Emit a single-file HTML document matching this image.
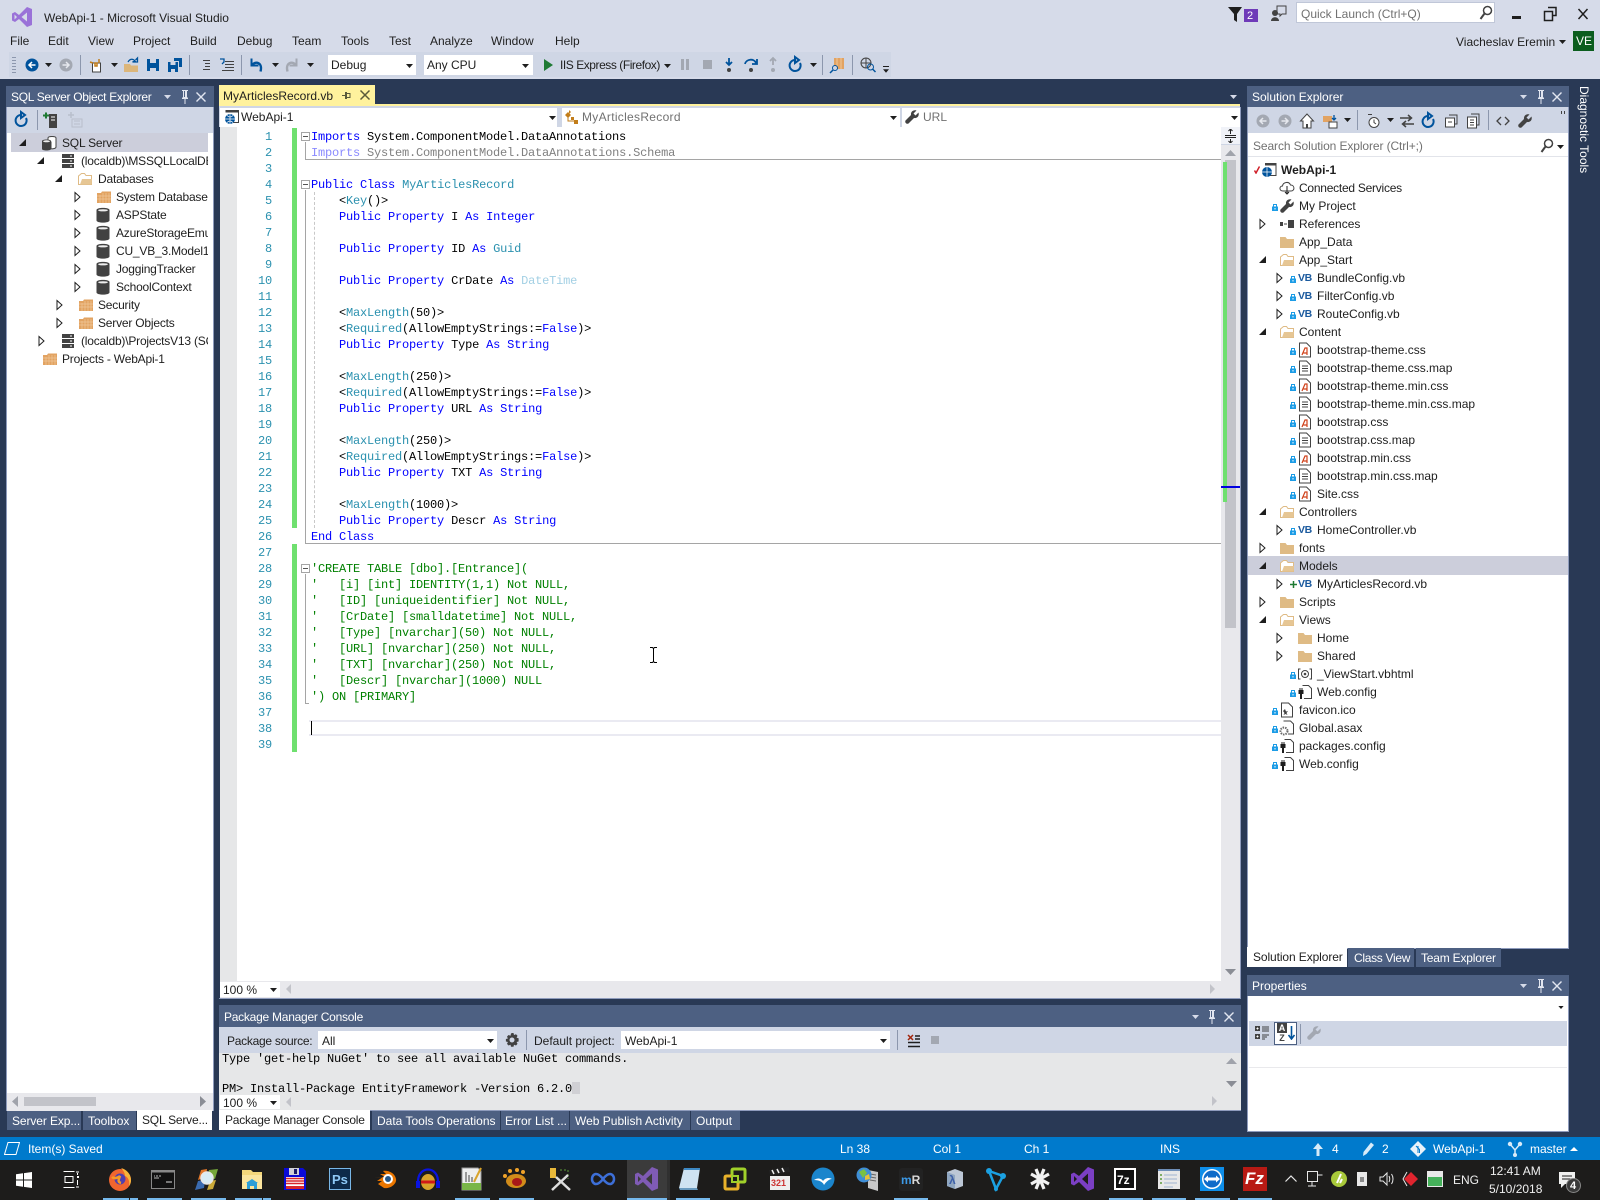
<!DOCTYPE html>
<html lang="en">
<head>
<meta charset="utf-8">
<title>WebApi-1 - Microsoft Visual Studio</title>
<style>
html,body{margin:0;padding:0;background:#293955}
body{position:relative;width:1600px;height:1200px;overflow:hidden}
.t{position:absolute;white-space:nowrap;font:12px/16px "Liberation Sans",sans-serif;color:#1e1e1e}
.w{color:#fff}.g{color:#717171}
.r{position:absolute}
svg.i{position:absolute;width:16px;height:16px;overflow:visible}
svg.a{position:absolute;width:7px;height:4px;overflow:visible}
svg.l{position:absolute;width:6px;height:8px;overflow:visible}
svg.k{position:absolute;width:24px;height:24px;overflow:visible;top:1167px}
pre{position:absolute;margin:0;font:12px/16px "Liberation Mono",monospace;letter-spacing:-.2px;color:#000}
.kw{color:#00f}.ty{color:#2b91af}.cm{color:#008000}.dt{color:#a3d0e4}.fk{color:#8a8aff}.fg{color:#808080}
.vb{position:absolute;font:bold 10.500px/12px "Liberation Sans",sans-serif;color:#1b5a9e;letter-spacing:-.4px}
.ub{position:absolute;top:1198px;height:2px;background:#76b9ed}
.sep{position:absolute;width:1px;background:#8c97ad}
.sq .t{letter-spacing:-.2px}
</style>
</head>
<body>
<svg width="0" height="0" style="position:absolute">
<defs>
<symbol id="dd" viewBox="0 0 7 4"><path d="M0 0h7L3.500 4z" fill="#1e1e1e"/></symbol>
<symbol id="dw" viewBox="0 0 7 4"><path d="M0 0h7L3.500 4z" fill="#d6dbe9"/></symbol>
<symbol id="ec" viewBox="0 0 16 16"><path d="M6 3.500L11 8 6 12.500z" fill="#fff" stroke="#1e1e1e"/></symbol>
<symbol id="ee" viewBox="0 0 16 16"><path d="M12 4v7H5z" fill="#1e1e1e"/></symbol>
<symbol id="fo" viewBox="0 0 16 16"><path d="M1 3h5.500L8 5h7v9H1z" fill="#dfbb85"/></symbol>
<symbol id="fp" viewBox="0 0 16 16"><path d="M1.500 13.500V5L4.500 2.500h3L9 4.500h5.500v9z" fill="#fff" stroke="#dfbb85"/><path d="M3 13.500L5 8h10l-.5 5.500z" fill="#e6c694"/></symbol>
<symbol id="df" viewBox="0 0 16 16"><path d="M1 4h4l1-1.500h9V14H1z" fill="#e2a362"/><path d="M4 6v8M7 4v10M10 4v10M13 4v10M1 7h14M1 10h14" stroke="#f0c798" stroke-width=".7"/></symbol>
<symbol id="db" viewBox="0 0 16 16"><path d="M1.500 3C1.500 .2 14.500 .2 14.500 3V13.500C14.500 16.300 1.500 16.300 1.500 13.500z" fill="#424242"/><ellipse cx="8" cy="3.300" rx="5" ry="1.100" fill="#eee"/></symbol>
<symbol id="sv" viewBox="0 0 16 16"><path d="M2 1h12v14H2z" fill="#424242"/><path d="M2 5.500h12M2 10.500h12" stroke="#fff"/><path d="M10 3h2M10 8h2M10 13h2" stroke="#fff"/></symbol>
<symbol id="sq" viewBox="0 0 16 16"><path d="M7 3C7 1 15 1 15 3v9c0 1.500-3 2-5 1.800V7H7z" fill="#fff" stroke="#424242"/><path d="M1 6c0-2 9-2 9 0v8c0 2-9 2-9 0z" fill="#424242"/><ellipse cx="5.500" cy="6.300" rx="3.500" ry="1" fill="#eee"/></symbol>
<symbol id="lk" viewBox="0 0 6 8"><path d="M0 3.500h6V8H0z" fill="#1c9ce6"/><path d="M1.500 3.500V1.500h3v2" fill="none" stroke="#1c9ce6"/><path d="M2.500 5h1v1.500h-1z" fill="#fff"/></symbol>
<symbol id="cs" viewBox="0 0 16 16"><path d="M2.500 1h7l4 4v10h-11z" fill="#fff" stroke="#424242"/><path d="M5 13l3-7h2v7M6.500 11h3" fill="none" stroke="#d0421b" stroke-width="1.200"/></symbol>
<symbol id="dc" viewBox="0 0 16 16"><path d="M2.500 1h7l4 4v10h-11z" fill="#fff" stroke="#424242"/><path d="M5 6h6M5 8.500h6M5 11h6" stroke="#424242"/></symbol>
<symbol id="pl" viewBox="0 0 16 16"><path d="M5.500 1.500h6l3 3v10H7" fill="#fff" stroke="#424242"/><path d="M1.500 6v4h1.500v5h2v-5h1.500V6H5.500V4H4.500v2h-1V4h-1v2z" fill="#1e1e1e"/></symbol>
<symbol id="wr" viewBox="0 0 16 16"><path d="M14.500 3.500l-3 3-2-2 3-3C9.500.6 6.500 2.500 7 6L1.500 11.500c-1 2 1 4 3 3L10 9c3.300.5 5.500-2 4.500-5.500z" fill="#424242"/></symbol>
<symbol id="mg" viewBox="0 0 16 16"><circle cx="9.500" cy="5.500" r="4" fill="none" stroke="#424242" stroke-width="1.500"/><path d="M6.500 8.500L2.500 14" stroke="#424242" stroke-width="2"/></symbol>
<symbol id="pin" viewBox="0 0 16 16"><path d="M5 1h6v1h-1v6l1 1v1H8.500v5h-1v-5H5V9l1-1V2H5zM7 2v6h1V2z" fill="#e2e6f0"/></symbol>
<symbol id="xx" viewBox="0 0 16 16"><path d="M3.500 3.500l9 9M12.500 3.500l-9 9" stroke="#e2e6f0" stroke-width="1.400"/></symbol>
</defs>
</svg>

<!-- title / menu -->
<div class="r" style="left:0;top:0;width:1600px;height:79px;background:#d6dbe9"></div>
<svg class="i" style="left:11px;top:7px;width:22px;height:20px" viewBox="0 0 22 20"><path d="M16 0l5 2v16l-5 2-8-8-4 3-3-1.500v-7L4 5l4 3z" fill="#9a72d8"/><path d="M16 5.500v9L10.500 10zM3.500 7.500v5L6 10z" fill="#d6dbe9"/></svg>
<span class="t" style="left:44px;top:10px">WebApi-1 - Microsoft Visual Studio</span>
<span class="t" style="left:10px;top:33px">File</span>
<span class="t" style="left:48px;top:33px">Edit</span>
<span class="t" style="left:88px;top:33px">View</span>
<span class="t" style="left:133px;top:33px">Project</span>
<span class="t" style="left:190px;top:33px">Build</span>
<span class="t" style="left:237px;top:33px">Debug</span>
<span class="t" style="left:292px;top:33px">Team</span>
<span class="t" style="left:341px;top:33px">Tools</span>
<span class="t" style="left:389px;top:33px">Test</span>
<span class="t" style="left:430px;top:33px">Analyze</span>
<span class="t" style="left:491px;top:33px">Window</span>
<span class="t" style="left:555px;top:33px">Help</span>

<!-- top right -->
<svg class="i" style="left:1228px;top:6px" viewBox="0 0 16 16"><path d="M0 1h14L9 8v8L6 14V8z" fill="#1e1e1e"/></svg>
<div class="r" style="left:1244px;top:9px;width:14px;height:13px;background:#6e3ab8"></div>
<span class="t w" style="left:1247px;top:8px;font-size:11px">2</span>
<svg class="i" style="left:1271px;top:5px" viewBox="0 0 16 16"><path d="M6 1h9v8h-4l-2 2v-2H6z" fill="none" stroke="#424242"/><circle cx="4" cy="8" r="3" fill="#424242"/><path d="M0 16c0-5 8-5 8 0z" fill="#424242"/></svg>
<div class="r" style="left:1296px;top:2px;width:197px;height:19px;background:#fff;border:1px solid #c0c7d8"></div>
<span class="t g" style="left:1301px;top:6px">Quick Launch (Ctrl+Q)</span>
<svg class="i" style="left:1478px;top:5px" ><use href="#mg"/></svg>
<div class="r" style="left:1512px;top:16px;width:9px;height:3px;background:#1e1e1e"></div>
<svg class="i" style="left:1542px;top:6px" viewBox="0 0 16 16"><path d="M6 1.500h8v8h-3M2.500 5.500h8v9h-8z" fill="none" stroke="#1e1e1e" stroke-width="1.500"/></svg>
<svg class="i" style="left:1575px;top:6px" viewBox="0 0 16 16"><path d="M3.500 3l9 10M12.500 3l-9 10" stroke="#1e1e1e" stroke-width="1.500"/></svg>
<span class="t" style="left:1456px;top:34px">Viacheslav Eremin</span>
<svg class="a" style="left:1559px;top:40px"><use href="#dd"/></svg>
<div class="r" style="left:1573px;top:31px;width:21px;height:20px;background:#0b5d1e"></div>
<span class="t w" style="left:1576px;top:33px">VE</span>

<!-- toolbar -->
<div class="r" style="left:9px;top:52px;width:882px;height:25px;background:#cfd6e5"></div>
<div class="r" style="left:12px;top:56px;width:4px;height:17px;background:repeating-linear-gradient(0deg,#8c97ad 0 1px,transparent 1px 3px)"></div>
<svg class="i" style="left:24px;top:57px" viewBox="0 0 16 16"><circle cx="8" cy="8" r="6.500" fill="#00539c"/><path d="M11.500 8H5.500M8 5L5 8l3 3" fill="none" stroke="#fff" stroke-width="1.500"/></svg>
<svg class="a" style="left:45px;top:63px"><use href="#dd"/></svg>
<svg class="i" style="left:58px;top:57px" viewBox="0 0 16 16"><circle cx="8" cy="8" r="6.500" fill="#a3a8b2"/><path d="M4.500 8h6M8 5l3 3-3 3" fill="none" stroke="#e6e8ee" stroke-width="1.500"/></svg>
<div class="sep" style="left:80px;top:55px;height:20px"></div>
<svg class="i" style="left:88px;top:57px" viewBox="0 0 16 16"><path d="M4.500 6h8v9h-8z" fill="#fff" stroke="#424242"/><path d="M7 6h2v3H7zM11 2v4M2 5l3 1" stroke="#c27d1a" stroke-width="1.500" fill="none"/></svg>
<svg class="a" style="left:111px;top:63px"><use href="#dd"/></svg>
<svg class="i" style="left:123px;top:57px" viewBox="0 0 16 16"><path d="M1 7h6l1 1.500h7V15H1z" fill="#dcb67a"/><path d="M5 5C7 1.500 10 1.500 12 4L9.500 5h5V1l-2 2" fill="none" stroke="#00539c" stroke-width="1.300"/></svg>
<svg class="i" style="left:145px;top:57px" viewBox="0 0 16 16"><path d="M2 2h12v12H2z" fill="#00539c"/><path d="M5 2h6v4H5z" fill="#cfd6e5"/><path d="M5 11h6v3H5z" fill="#cfd6e5"/></svg>
<svg class="i" style="left:167px;top:57px" viewBox="0 0 16 16"><path d="M1 5h10v10H1z" fill="#00539c"/><path d="M3.500 5h5v3h-5zM4 12h4v3H4z" fill="#cfd6e5"/><path d="M7 1h8v9h-3V4H7z" fill="#00539c"/></svg>
<div class="sep" style="left:189px;top:55px;height:20px"></div>
<svg class="i" style="left:198px;top:57px" viewBox="0 0 16 16"><path d="M5 3.500h7M7 6.500h5M7 9.500h5M5 12.500h7" stroke="#424242"/></svg>
<svg class="i" style="left:219px;top:57px" viewBox="0 0 16 16"><path d="M6 4.500h9M6 7.500h9M6 10.500h9M3 13.500h12" stroke="#424242"/><path d="M1 2h4v3L3 7" fill="none" stroke="#00539c" stroke-width="1.300"/></svg>
<div class="sep" style="left:241px;top:55px;height:20px"></div>
<svg class="i" style="left:248px;top:57px" viewBox="0 0 16 16"><path d="M3.500 1.500v7h7" fill="none" stroke="#00539c" stroke-width="2"/><path d="M3.500 8.500C7 3.500 15 5 12.500 14.500" fill="none" stroke="#00539c" stroke-width="2.400"/></svg>
<svg class="a" style="left:272px;top:63px"><use href="#dd"/></svg>
<svg class="i" style="left:284px;top:57px" viewBox="0 0 16 16"><path d="M12.500 1.500v7h-7" fill="none" stroke="#a3a8b2" stroke-width="2"/><path d="M12.500 8.500C9 3.500 1 5 3.500 14.500" fill="none" stroke="#a3a8b2" stroke-width="2.400"/></svg>
<svg class="a" style="left:307px;top:63px"><use href="#dd"/></svg>
<div class="r" style="left:328px;top:55px;width:88px;height:20px;background:#fff"></div>
<span class="t" style="left:331px;top:57px">Debug</span>
<svg class="a" style="left:406px;top:64px"><use href="#dd"/></svg>
<div class="r" style="left:424px;top:55px;width:109px;height:20px;background:#fff"></div>
<span class="t" style="left:427px;top:57px">Any CPU</span>
<svg class="a" style="left:522px;top:64px"><use href="#dd"/></svg>
<svg class="i" style="left:540px;top:57px" viewBox="0 0 16 16"><path d="M4 2l9 6-9 6z" fill="#1e7a33"/></svg>
<span class="t" style="left:560px;top:57px;letter-spacing:-.45px">IIS Express (Firefox)</span>
<svg class="a" style="left:664px;top:64px"><use href="#dd"/></svg>
<div class="r" style="left:681px;top:59px;width:3px;height:11px;background:#a3a8b2"></div>
<div class="r" style="left:686px;top:59px;width:3px;height:11px;background:#a3a8b2"></div>
<div class="r" style="left:703px;top:60px;width:9px;height:9px;background:#a3a8b2"></div>
<svg class="i" style="left:721px;top:57px" viewBox="0 0 16 16"><path d="M8 1v6M5 5l3 3 3-3" fill="none" stroke="#00539c" stroke-width="1.800"/><circle cx="8" cy="13" r="2" fill="#424242"/></svg>
<svg class="i" style="left:743px;top:57px" viewBox="0 0 16 16"><path d="M2 7C3 2 11 1 13 6M14 2v5H9" fill="none" stroke="#00539c" stroke-width="1.800"/><circle cx="8" cy="13" r="2" fill="#424242"/></svg>
<svg class="i" style="left:765px;top:57px" viewBox="0 0 16 16"><path d="M8 8V2M5 4l3-3 3 3" fill="none" stroke="#a3a8b2" stroke-width="1.800"/><circle cx="8" cy="13" r="2" fill="#a3a8b2"/></svg>
<svg class="i" style="left:788px;top:57px" viewBox="0 0 16 16"><path d="M7 3a5.500 5.500 0 1 0 5 3M7 0v6L11 3z" fill="none" stroke="#00539c" stroke-width="2"/></svg>
<svg class="a" style="left:810px;top:63px"><use href="#dd"/></svg>
<div class="sep" style="left:822px;top:55px;height:20px"></div>
<svg class="i" style="left:829px;top:57px" viewBox="0 0 16 16"><path d="M5 1h10v11H5z" fill="#e2a362"/><path d="M8 1v11M12 1v11" stroke="#f0c798"/><circle cx="6" cy="11" r="2.500" fill="#cfd6e5" stroke="#00539c"/><path d="M4 13l-3 3" stroke="#00539c" stroke-width="1.500"/></svg>
<div class="sep" style="left:852px;top:55px;height:20px"></div>
<svg class="i" style="left:860px;top:57px" viewBox="0 0 16 16"><circle cx="6" cy="6" r="5" fill="#cfd6e5" stroke="#424242"/><path d="M1 6h10M6 1v10" stroke="#424242"/><circle cx="10.500" cy="10" r="3" fill="none" stroke="#00539c"/><path d="M12.500 12l3 3" stroke="#00539c" stroke-width="1.500"/></svg>
<div class="r" style="left:883px;top:66px;width:6px;height:1px;background:#1e1e1e"></div>
<svg class="a" style="left:883px;top:69px;width:6px"><use href="#dd"/></svg>

<!-- SQL Server Object Explorer -->
<div class="r" style="left:6px;top:86px;width:206px;height:1024px;background:#fff;border:1px solid #8e9bbc;border-bottom:0"></div>
<div class="r" style="left:6px;top:86px;width:208px;height:21px;background:#4d6082"></div>
<span class="t w" style="left:11px;top:89px;letter-spacing:-.3px">SQL Server Object Explorer</span>
<svg class="a" style="left:164px;top:95px"><use href="#dw"/></svg>
<svg class="i" style="left:177px;top:89px"><use href="#pin"/></svg>
<svg class="i" style="left:193px;top:89px"><use href="#xx"/></svg>
<div class="r" style="left:7px;top:107px;width:206px;height:26px;background:#cfd6e5"></div>
<svg class="i" style="left:14px;top:112px" viewBox="0 0 16 16"><path d="M7 3a5.500 5.500 0 1 0 5 3M7 0v6L11 3z" fill="none" stroke="#00539c" stroke-width="2"/></svg>
<div class="sep" style="left:37px;top:110px;height:20px"></div>
<svg class="i" style="left:43px;top:112px" viewBox="0 0 16 16"><path d="M6 2h8v14H6z" fill="#424242"/><path d="M8 5h4M8 8h4" stroke="#fff"/><path d="M0 3.500h6M3 .5v6" stroke="#1e7a33" stroke-width="2"/></svg>
<svg class="i" style="left:67px;top:112px" viewBox="0 0 16 16"><path d="M5 7h10v8H5z" fill="none" stroke="#b9bfcc"/><path d="M7 9h6M7 12h6" stroke="#b9bfcc"/><path d="M4 0v6M1 3h6" stroke="#b9bfcc" stroke-width="1.500"/></svg>
<div class="r" style="left:11px;top:133px;width:197px;height:19px;background:#ccceDb"></div>

<div class="r sq" style="left:0;top:0;width:208px;height:1093px;overflow:hidden">
<svg class="i" style="left:14px;top:135px"><use href="#ee"/></svg>
<svg class="i" style="left:41px;top:135px"><use href="#sq"/></svg>
<span class="t" style="left:62px;top:135px">SQL Server</span>
<svg class="i" style="left:32px;top:153px"><use href="#ee"/></svg>
<svg class="i" style="left:60px;top:153px"><use href="#sv"/></svg>
<span class="t" style="left:81px;top:153px">(localdb)\MSSQLLocalDB</span>
<svg class="i" style="left:50px;top:171px"><use href="#ee"/></svg>
<svg class="i" style="left:77px;top:171px"><use href="#fp"/></svg>
<span class="t" style="left:98px;top:171px">Databases</span>
<svg class="i" style="left:69px;top:189px"><use href="#ec"/></svg>
<svg class="i" style="left:96px;top:189px"><use href="#df"/></svg>
<span class="t" style="left:116px;top:189px">System Databases</span>
<svg class="i" style="left:69px;top:207px"><use href="#ec"/></svg>
<svg class="i" style="left:95px;top:207px"><use href="#db"/></svg>
<span class="t" style="left:116px;top:207px">ASPState</span>
<svg class="i" style="left:69px;top:225px"><use href="#ec"/></svg>
<svg class="i" style="left:95px;top:225px"><use href="#db"/></svg>
<span class="t" style="left:116px;top:225px">AzureStorageEmulator</span>
<svg class="i" style="left:69px;top:243px"><use href="#ec"/></svg>
<svg class="i" style="left:95px;top:243px"><use href="#db"/></svg>
<span class="t" style="left:116px;top:243px">CU_VB_3.Model1</span>
<svg class="i" style="left:69px;top:261px"><use href="#ec"/></svg>
<svg class="i" style="left:95px;top:261px"><use href="#db"/></svg>
<span class="t" style="left:116px;top:261px">JoggingTracker</span>
<svg class="i" style="left:69px;top:279px"><use href="#ec"/></svg>
<svg class="i" style="left:95px;top:279px"><use href="#db"/></svg>
<span class="t" style="left:116px;top:279px">SchoolContext</span>
<svg class="i" style="left:51px;top:297px"><use href="#ec"/></svg>
<svg class="i" style="left:78px;top:297px"><use href="#df"/></svg>
<span class="t" style="left:98px;top:297px">Security</span>
<svg class="i" style="left:51px;top:315px"><use href="#ec"/></svg>
<svg class="i" style="left:78px;top:315px"><use href="#df"/></svg>
<span class="t" style="left:98px;top:315px">Server Objects</span>
<svg class="i" style="left:33px;top:333px"><use href="#ec"/></svg>
<svg class="i" style="left:60px;top:333px"><use href="#sv"/></svg>
<span class="t" style="left:81px;top:333px">(localdb)\ProjectsV13 (SQL Server)</span>
<svg class="i" style="left:42px;top:351px"><use href="#df"/></svg>
<span class="t" style="left:62px;top:351px">Projects - WebApi-1</span>
</div>
<div class="r" style="left:7px;top:1093px;width:206px;height:18px;background:#e8e8ec"></div>
<div class="r" style="left:24px;top:1097px;width:72px;height:9px;background:#c2c3c9"></div>
<svg class="r" style="left:12px;top:1096px;width:6px;height:11px" viewBox="0 0 6 11"><path d="M6 0v11L0 5.500z" fill="#a0a3ab"/></svg>
<svg class="r" style="left:200px;top:1096px;width:6px;height:11px" viewBox="0 0 6 11"><path d="M0 0v11l6-5.500z" fill="#8a8d95"/></svg>
<div class="r" style="left:7px;top:1111px;width:74px;height:19px;background:#4d6082"></div>
<span class="t w" style="left:12px;top:1113px;letter-spacing:-.1px">Server Exp...</span>
<div class="r" style="left:83px;top:1111px;width:53px;height:19px;background:#4d6082"></div>
<span class="t w" style="left:88px;top:1113px">Toolbox</span>
<div class="r" style="left:137px;top:1110px;width:75px;height:20px;background:#fff"></div>
<span class="t" style="left:142px;top:1112px;letter-spacing:-.2px">SQL Serve...</span>

<!-- document -->
<div class="r" style="left:219px;top:85px;width:156px;height:21px;background:#fff29d"></div>
<div class="r" style="left:219px;top:104px;width:1021px;height:2px;background:#fff29d"></div>
<span class="t" style="left:223px;top:88px">MyArticlesRecord.vb</span>
<svg class="r" style="left:342px;top:91px;width:9px;height:9px" viewBox="0 0 9 9"><path d="M0 4.500h3M3.500 1.500h1v6h-1zM4.500 2.500h3.500v4H4.500z" fill="none" stroke="#5a5a3a"/></svg>
<svg class="i" style="left:357px;top:87px" viewBox="0 0 16 16"><path d="M3.500 3.500l9 9M12.500 3.500l-9 9" stroke="#5a5a3a" stroke-width="1.500"/></svg>
<svg class="a" style="left:1230px;top:95px"><use href="#dw"/></svg>

<div class="r" style="left:219px;top:106px;width:1021px;height:21px;background:#cfd6e5"></div>
<div class="r" style="left:220px;top:108px;width:337px;height:19px;background:#fff"></div>
<svg class="i" style="left:224px;top:109px" viewBox="0 0 16 16"><path d="M1.500 1.500h13v12H9" fill="none" stroke="#424242"/><path d="M1.500 1.500h13v2h-13z" fill="#424242"/><circle cx="6" cy="10" r="5" fill="#00539c"/><path d="M1 10h10M6 5v10M3 6.500c2 2 4 2 6 0M3 13.500c2-2 4-2 6 0" stroke="#fff" fill="none" stroke-width=".7"/></svg>
<span class="t" style="left:241px;top:109px">WebApi-1</span>
<svg class="a" style="left:549px;top:116px"><use href="#dd"/></svg>
<div class="r" style="left:562px;top:108px;width:338px;height:19px;background:#fff"></div>
<svg class="i" style="left:564px;top:109px" viewBox="0 0 16 16"><path d="M1 6l3-3 3 3-3 3z M7 8h3v3H7z M10 11h4v4h-4z M5 1l2 2-2 2z" fill="#c27d1a"/><path d="M4 8v4h6" stroke="#c27d1a" fill="none"/></svg>
<span class="t g" style="left:582px;top:109px;letter-spacing:.3px">MyArticlesRecord</span>
<svg class="a" style="left:890px;top:116px"><use href="#dd"/></svg>
<div class="r" style="left:902px;top:108px;width:338px;height:19px;background:#fff"></div>
<svg class="i" style="left:904px;top:109px"><use href="#wr"/></svg>
<span class="t g" style="left:923px;top:109px">URL</span>
<svg class="a" style="left:1231px;top:116px"><use href="#dd"/></svg>

<!-- editor -->
<div class="r" style="left:220px;top:127px;width:1020px;height:871px;background:#fff"></div>
<div class="r" style="left:220px;top:127px;width:17px;height:871px;background:#e6e7e8"></div>
<div class="r" style="left:292px;top:128px;width:5px;height:400px;background:#6fe06f"></div>
<div class="r" style="left:292px;top:544px;width:5px;height:208px;background:#6fe06f"></div>

<pre style="left:237px;top:129px;width:35px;text-align:right;color:#2b91af">1
2
3
4
5
6
7
8
9
10
11
12
13
14
15
16
17
18
19
20
21
22
23
24
25
26
27
28
29
30
31
32
33
34
35
36
37
38
39</pre>

<!-- folding -->
<div class="r" style="left:305px;top:142px;width:1px;height:17px;background:#a5a5a5"></div>
<div class="r" style="left:305px;top:159px;width:916px;height:1px;background:#a5a5a5"></div>
<div class="r" style="left:301px;top:132px;width:7px;height:7px;border:1px solid #a5a5a5;background:#fff"></div>
<div class="r" style="left:303px;top:136px;width:5px;height:1px;background:#555"></div>
<div class="r" style="left:305px;top:190px;width:1px;height:353px;background:#a5a5a5"></div>
<div class="r" style="left:305px;top:543px;width:916px;height:1px;background:#a5a5a5"></div>
<div class="r" style="left:301px;top:180px;width:7px;height:7px;border:1px solid #a5a5a5;background:#fff"></div>
<div class="r" style="left:303px;top:184px;width:5px;height:1px;background:#555"></div>
<div class="r" style="left:314px;top:192px;width:0;height:336px;border-left:1px dashed #c8c8c8"></div>
<div class="r" style="left:305px;top:574px;width:1px;height:129px;background:#a5a5a5"></div>
<div class="r" style="left:305px;top:703px;width:4px;height:1px;background:#a5a5a5"></div>
<div class="r" style="left:301px;top:564px;width:7px;height:7px;border:1px solid #a5a5a5;background:#fff"></div>
<div class="r" style="left:303px;top:568px;width:5px;height:1px;background:#555"></div>

<!-- current line -->
<div class="r" style="left:309px;top:720px;width:912px;height:12px;border-top:2px solid #eaeaf2;border-bottom:2px solid #eaeaf2"></div>
<div class="r" style="left:311px;top:721px;width:1px;height:14px;background:#000"></div>

<pre style="left:311px;top:129px"><span class="kw">Imports</span> System.ComponentModel.DataAnnotations
<span class="fk">Imports</span> <span class="fg">System.ComponentModel.DataAnnotations.Schema</span>

<span class="kw">Public</span> <span class="kw">Class</span> <span class="ty">MyArticlesRecord</span>
    &lt;<span class="ty">Key</span>()&gt;
    <span class="kw">Public</span> <span class="kw">Property</span> I <span class="kw">As</span> <span class="kw">Integer</span>

    <span class="kw">Public</span> <span class="kw">Property</span> ID <span class="kw">As</span> <span class="ty">Guid</span>

    <span class="kw">Public</span> <span class="kw">Property</span> CrDate <span class="kw">As</span> <span class="dt">DateTime</span>

    &lt;<span class="ty">MaxLength</span>(50)&gt;
    &lt;<span class="ty">Required</span>(AllowEmptyStrings:=<span class="kw">False</span>)&gt;
    <span class="kw">Public</span> <span class="kw">Property</span> Type <span class="kw">As</span> <span class="kw">String</span>

    &lt;<span class="ty">MaxLength</span>(250)&gt;
    &lt;<span class="ty">Required</span>(AllowEmptyStrings:=<span class="kw">False</span>)&gt;
    <span class="kw">Public</span> <span class="kw">Property</span> URL <span class="kw">As</span> <span class="kw">String</span>

    &lt;<span class="ty">MaxLength</span>(250)&gt;
    &lt;<span class="ty">Required</span>(AllowEmptyStrings:=<span class="kw">False</span>)&gt;
    <span class="kw">Public</span> <span class="kw">Property</span> TXT <span class="kw">As</span> <span class="kw">String</span>

    &lt;<span class="ty">MaxLength</span>(1000)&gt;
    <span class="kw">Public</span> <span class="kw">Property</span> Descr <span class="kw">As</span> <span class="kw">String</span>
<span class="kw">End</span> <span class="kw">Class</span>

<span class="cm">'CREATE TABLE [dbo].[Entrance](
'   [i] [int] IDENTITY(1,1) Not NULL,
'   [ID] [uniqueidentifier] Not NULL,
'   [CrDate] [smalldatetime] Not NULL,
'   [Type] [nvarchar](50) Not NULL,
'   [URL] [nvarchar](250) Not NULL,
'   [TXT] [nvarchar](250) Not NULL,
'   [Descr] [nvarchar](1000) NULL
') ON [PRIMARY]</span></pre>

<!-- I-beam -->
<svg class="r" style="left:649px;top:647px;width:9px;height:16px" viewBox="0 0 9 16"><path d="M1 .5h2.500L4.500 1.500 5.500.5H8M4.500 1.500v13M1 15.500h2.500l1-1 1 1H8" fill="none" stroke="#000"/></svg>

<!-- editor scrollbar -->
<div class="r" style="left:1221px;top:127px;width:19px;height:854px;background:#e8e8ec"></div>
<div class="r" style="left:1221px;top:127px;width:19px;height:18px;background:#f0f2f8;border-bottom:1px solid #cfd6e5;box-sizing:border-box"></div>
<svg class="r" style="left:1224px;top:129px;width:13px;height:14px" viewBox="0 0 13 14"><path d="M1 6.500h11M1 8.500h11" stroke="#222"/><path d="M6.500 0v5M4.500 2l2-2 2 2M6.500 14v-4M4.500 12l2 2 2-2" fill="none" stroke="#222"/></svg>
<svg class="r" style="left:1225px;top:150px;width:11px;height:6px" viewBox="0 0 11 6"><path d="M0 6L5.500 0 11 6z" fill="#a0a3ab"/></svg>
<div class="r" style="left:1225px;top:160px;width:11px;height:468px;background:#c2c3c9"></div>
<div class="r" style="left:1223px;top:162px;width:4px;height:340px;background:#6fe06f"></div>
<div class="r" style="left:1221px;top:486px;width:19px;height:2px;background:#0000e0"></div>
<svg class="r" style="left:1225px;top:969px;width:11px;height:6px" viewBox="0 0 11 6"><path d="M0 0l5.500 6L11 0z" fill="#8a8d95"/></svg>
<div class="r" style="left:220px;top:981px;width:1020px;height:17px;background:#e8e8ec"></div>
<div class="r" style="left:220px;top:982px;width:60px;height:15px;background:#fff"></div>
<span class="t" style="left:223px;top:982px">100 %</span>
<svg class="a" style="left:270px;top:988px"><use href="#dd"/></svg>
<svg class="r" style="left:286px;top:984px;width:5px;height:10px" viewBox="0 0 5 10"><path d="M5 0v10L0 5z" fill="#c2c3c9"/></svg>
<svg class="r" style="left:1210px;top:984px;width:5px;height:10px" viewBox="0 0 5 10"><path d="M0 0v10l5-5z" fill="#c2c3c9"/></svg>
<div class="r" style="left:219px;top:998px;width:1022px;height:1px;background:#8e9bbc"></div>
<div class="r" style="left:1240px;top:107px;width:1px;height:891px;background:#8e9bbc"></div>

<!-- Package Manager Console -->
<div class="r" style="left:219px;top:1005px;width:1022px;height:22px;background:#4d6082"></div>
<span class="t w" style="left:224px;top:1009px;letter-spacing:-.25px">Package Manager Console</span>
<svg class="a" style="left:1192px;top:1015px"><use href="#dw"/></svg>
<svg class="i" style="left:1204px;top:1009px"><use href="#pin"/></svg>
<svg class="i" style="left:1221px;top:1009px"><use href="#xx"/></svg>
<div class="r" style="left:219px;top:1027px;width:1022px;height:26px;background:#cfd6e5"></div>
<span class="t" style="left:227px;top:1033px;letter-spacing:-.27px">Package source:</span>
<div class="r" style="left:318px;top:1031px;width:179px;height:18px;background:#fff"></div>
<span class="t" style="left:322px;top:1033px">All</span>
<svg class="a" style="left:487px;top:1039px"><use href="#dd"/></svg>
<svg class="i" style="left:504px;top:1032px" viewBox="0 0 16 16"><path d="M8 1l1.500 0 .5 2 2-.7 1.500 1.500-.9 1.900 2 .5V9.500l-2 .5.900 1.900L12 13.500l-2-.8-.5 2.100h-2.500L6.500 12.700l-2 .8-1.500-1.600.9-1.900-2-.5V7l2-.5L3 4.600 4.500 3l2 .7L7 1.500z" fill="#424242"/><circle cx="8" cy="8" r="2.500" fill="#cfd6e5"/></svg>
<div class="sep" style="left:526px;top:1030px;height:20px"></div>
<span class="t" style="left:534px;top:1033px">Default project:</span>
<div class="r" style="left:621px;top:1031px;width:269px;height:18px;background:#fff"></div>
<span class="t" style="left:625px;top:1033px">WebApi-1</span>
<svg class="a" style="left:880px;top:1039px"><use href="#dd"/></svg>
<div class="sep" style="left:897px;top:1030px;height:20px"></div>
<svg class="i" style="left:905px;top:1033px" viewBox="0 0 16 16"><path d="M3 2l5 5M8 2L3 7" stroke="#a1260d" stroke-width="1.500"/><path d="M10 3h5M10 6h5M3 9.500h12M3 13.500h12" stroke="#1e1e1e" stroke-width="1.500"/></svg>
<div class="r" style="left:931px;top:1036px;width:8px;height:8px;background:#a3a8b2"></div>
<div class="r" style="left:219px;top:1053px;width:1022px;height:57px;background:#e6e7e8"></div>
<pre style="left:222px;top:1051px">Type 'get-help NuGet' to see all available NuGet commands.</pre>
<pre style="left:222px;top:1081px">PM&gt; Install-Package EntityFramework -Version 6.2.0</pre>
<div class="r" style="left:572px;top:1082px;width:8px;height:12px;background:#d0d0d4"></div>
<svg class="r" style="left:1226px;top:1058px;width:11px;height:6px" viewBox="0 0 11 6"><path d="M0 6L5.500 0 11 6z" fill="#a0a3ab"/></svg>
<svg class="r" style="left:1226px;top:1081px;width:11px;height:6px" viewBox="0 0 11 6"><path d="M0 0l5.500 6L11 0z" fill="#8a8d95"/></svg>
<div class="r" style="left:220px;top:1095px;width:60px;height:14px;background:#fff"></div>
<span class="t" style="left:223px;top:1095px">100 %</span>
<svg class="a" style="left:270px;top:1101px"><use href="#dd"/></svg>
<svg class="r" style="left:286px;top:1097px;width:5px;height:10px" viewBox="0 0 5 10"><path d="M5 0v10L0 5z" fill="#c2c3c9"/></svg>
<svg class="r" style="left:1212px;top:1096px;width:5px;height:10px" viewBox="0 0 5 10"><path d="M0 0v10l5-5z" fill="#c2c3c9"/></svg>
<div class="r" style="left:219px;top:1110px;width:1022px;height:1px;background:#8e9bbc"></div>
<div class="r" style="left:219px;top:1110px;width:151px;height:20px;background:#fff"></div>
<span class="t" style="left:225px;top:1112px;letter-spacing:-.22px">Package Manager Console</span>
<div class="r" style="left:372px;top:1111px;width:128px;height:19px;background:#4d6082"></div>
<span class="t w" style="left:377px;top:1113px">Data Tools Operations</span>
<div class="r" style="left:501px;top:1111px;width:68px;height:19px;background:#4d6082"></div>
<span class="t w" style="left:505px;top:1113px">Error List ...</span>
<div class="r" style="left:570px;top:1111px;width:120px;height:19px;background:#4d6082"></div>
<span class="t w" style="left:575px;top:1113px">Web Publish Activity</span>
<div class="r" style="left:691px;top:1111px;width:49px;height:19px;background:#4d6082"></div>
<span class="t w" style="left:696px;top:1113px">Output</span>

<!-- Solution Explorer -->
<div class="r" style="left:1247px;top:86px;width:320px;height:861px;background:#fff;border:1px solid #8e9bbc"></div>
<div class="r" style="left:1247px;top:86px;width:322px;height:21px;background:#4d6082"></div>
<span class="t w" style="left:1252px;top:89px">Solution Explorer</span>
<svg class="a" style="left:1520px;top:95px"><use href="#dw"/></svg>
<svg class="i" style="left:1533px;top:89px"><use href="#pin"/></svg>
<svg class="i" style="left:1549px;top:89px"><use href="#xx"/></svg>
<div class="r" style="left:1248px;top:107px;width:320px;height:26px;background:#cfd6e5"></div>
<svg class="i" style="left:1255px;top:113px" viewBox="0 0 16 16"><circle cx="8" cy="8" r="6.500" fill="#a3a8b2"/><path d="M11.500 8H5.500M8 5L5 8l3 3" fill="none" stroke="#e6e8ee" stroke-width="1.500"/></svg>
<svg class="i" style="left:1277px;top:113px" viewBox="0 0 16 16"><circle cx="8" cy="8" r="6.500" fill="#a3a8b2"/><path d="M4.500 8h6M8 5l3 3-3 3" fill="none" stroke="#e6e8ee" stroke-width="1.500"/></svg>
<svg class="i" style="left:1299px;top:113px" viewBox="0 0 16 16"><path d="M8 1L1.500 8H4v7h8V8h2.500z" fill="#fff" stroke="#424242"/><path d="M7 11h2v4H7z" fill="#424242"/></svg>
<svg class="i" style="left:1322px;top:113px" viewBox="0 0 16 16"><path d="M1 3h9v6H1z" fill="#e2a362"/><path d="M7 9h8v6H7z" fill="#fff" stroke="#424242"/><path d="M12 2v5M10 5l2 2 2-2" stroke="#00539c" fill="none" stroke-width="1.300"/></svg>
<svg class="a" style="left:1344px;top:118px"><use href="#dd"/></svg>
<div class="sep" style="left:1357px;top:110px;height:20px"></div>
<svg class="i" style="left:1366px;top:113px" viewBox="0 0 16 16"><circle cx="8" cy="9.500" r="5" fill="#fff" stroke="#424242"/><path d="M8 6.500v3l2 1.500M2 1.500h4" stroke="#424242" fill="none"/></svg>
<svg class="a" style="left:1387px;top:118px"><use href="#dd"/></svg>
<svg class="i" style="left:1399px;top:113px" viewBox="0 0 16 16"><path d="M1 5h11M9 2l3.500 3L9 8M15 11H4M7 8l-3.500 3L7 14" fill="none" stroke="#424242" stroke-width="1.500"/></svg>
<svg class="i" style="left:1421px;top:113px" viewBox="0 0 16 16"><path d="M7 3a5.500 5.500 0 1 0 5 3M7 0v6L11 3z" fill="none" stroke="#00539c" stroke-width="2"/></svg>
<svg class="i" style="left:1443px;top:113px" viewBox="0 0 16 16"><path d="M6 2h8v9h-2" fill="none" stroke="#424242"/><path d="M2.500 5h9v9h-9z" fill="#fff" stroke="#424242"/><path d="M5 9h4" stroke="#424242"/></svg>
<svg class="i" style="left:1465px;top:113px" viewBox="0 0 16 16"><path d="M6 1h8v11h-2" fill="none" stroke="#424242"/><path d="M2.500 4h9v11h-9z" fill="#fff" stroke="#424242"/><path d="M5 7h4M5 9.500h4M5 12h4" stroke="#424242"/></svg>
<div class="sep" style="left:1488px;top:110px;height:20px"></div>
<svg class="i" style="left:1495px;top:113px" viewBox="0 0 16 16"><path d="M6 4L2 8l4 4M10 4l4 4-4 4" fill="none" stroke="#424242" stroke-width="1.300"/></svg>
<svg class="i" style="left:1517px;top:113px"><use href="#wr"/></svg>
<div class="r" style="left:1561px;top:111px;width:1px;height:3px;background:#424242"></div>
<div class="r" style="left:1564px;top:111px;width:1px;height:3px;background:#424242"></div>
<div class="r" style="left:1248px;top:136px;width:320px;height:21px;background:#fff;border-bottom:1px solid #e2e4ea;box-sizing:border-box"></div>
<span class="t g" style="left:1253px;top:138px;letter-spacing:-.1px">Search Solution Explorer (Ctrl+;)</span>
<svg class="i" style="left:1539px;top:138px"><use href="#mg"/></svg>
<svg class="a" style="left:1557px;top:145px"><use href="#dd"/></svg>

<!-- tree -->
<div class="r" style="left:1248px;top:556px;width:320px;height:19px;background:#ccceDb"></div>
<svg class="r" style="left:1254px;top:166px;width:6px;height:8px" viewBox="0 0 6 8"><path d="M.5 4.500L2 7l3.500-6.500" fill="none" stroke="#d0202a" stroke-width="1.500"/></svg>
<svg class="i" style="left:1261px;top:162px" viewBox="0 0 16 16"><path d="M4 1.500h11v12H9" fill="none" stroke="#424242"/><path d="M4 1.500h11v2H4z" fill="#424242"/><circle cx="6" cy="10" r="5" fill="#00539c"/><path d="M1 10h10M6 5v10" stroke="#fff" stroke-width=".7"/></svg>
<span class="t" style="left:1281px;top:162px;font-weight:bold">WebApi-1</span>
<svg class="i" style="left:1279px;top:180px" viewBox="0 0 16 16"><path d="M4 11C0 11 0 6 3.500 6 4 2 10 1 11.500 5 16 5 16 11 12 11z" fill="#fff" stroke="#424242"/><path d="M8 6v8M6 12l2 2 2-2" stroke="#1e1e1e" fill="none"/></svg>
<span class="t" style="left:1299px;top:180px;letter-spacing:-.25px">Connected Services</span>
<svg class="l" style="left:1272px;top:203px"><use href="#lk"/></svg>
<svg class="i" style="left:1279px;top:198px"><use href="#wr"/></svg>
<span class="t" style="left:1299px;top:198px">My Project</span>
<svg class="i" style="left:1254px;top:216px"><use href="#ec"/></svg>
<svg class="i" style="left:1279px;top:216px" viewBox="0 0 16 16"><path d="M1 6h3v4H1zM9 4h6v8H9z" fill="#424242"/><path d="M5 8h3" stroke="#424242"/></svg>
<span class="t" style="left:1299px;top:216px">References</span>
<svg class="i" style="left:1279px;top:234px"><use href="#fo"/></svg>
<span class="t" style="left:1299px;top:234px">App_Data</span>
<svg class="i" style="left:1254px;top:252px"><use href="#ee"/></svg>
<svg class="i" style="left:1279px;top:252px"><use href="#fp"/></svg>
<span class="t" style="left:1299px;top:252px">App_Start</span>

<svg class="i" style="left:1271px;top:270px"><use href="#ec"/></svg>
<svg class="l" style="left:1290px;top:275px"><use href="#lk"/></svg>
<span class="vb" style="left:1298px;top:272px">VB</span>
<span class="t" style="left:1317px;top:270px">BundleConfig.vb</span>
<svg class="i" style="left:1271px;top:288px"><use href="#ec"/></svg>
<svg class="l" style="left:1290px;top:293px"><use href="#lk"/></svg>
<span class="vb" style="left:1298px;top:290px">VB</span>
<span class="t" style="left:1317px;top:288px">FilterConfig.vb</span>
<svg class="i" style="left:1271px;top:306px"><use href="#ec"/></svg>
<svg class="l" style="left:1290px;top:311px"><use href="#lk"/></svg>
<span class="vb" style="left:1298px;top:308px">VB</span>
<span class="t" style="left:1317px;top:306px">RouteConfig.vb</span>

<svg class="i" style="left:1254px;top:324px"><use href="#ee"/></svg>
<svg class="i" style="left:1279px;top:324px"><use href="#fp"/></svg>
<span class="t" style="left:1299px;top:324px">Content</span>

<svg class="l" style="left:1290px;top:347px"><use href="#lk"/></svg><svg class="i" style="left:1297px;top:342px"><use href="#cs"/></svg>
<span class="t" style="left:1317px;top:342px">bootstrap-theme.css</span>
<svg class="l" style="left:1290px;top:365px"><use href="#lk"/></svg><svg class="i" style="left:1297px;top:360px"><use href="#dc"/></svg>
<span class="t" style="left:1317px;top:360px">bootstrap-theme.css.map</span>
<svg class="l" style="left:1290px;top:383px"><use href="#lk"/></svg><svg class="i" style="left:1297px;top:378px"><use href="#cs"/></svg>
<span class="t" style="left:1317px;top:378px">bootstrap-theme.min.css</span>
<svg class="l" style="left:1290px;top:401px"><use href="#lk"/></svg><svg class="i" style="left:1297px;top:396px"><use href="#dc"/></svg>
<span class="t" style="left:1317px;top:396px">bootstrap-theme.min.css.map</span>
<svg class="l" style="left:1290px;top:419px"><use href="#lk"/></svg><svg class="i" style="left:1297px;top:414px"><use href="#cs"/></svg>
<span class="t" style="left:1317px;top:414px">bootstrap.css</span>
<svg class="l" style="left:1290px;top:437px"><use href="#lk"/></svg><svg class="i" style="left:1297px;top:432px"><use href="#dc"/></svg>
<span class="t" style="left:1317px;top:432px">bootstrap.css.map</span>
<svg class="l" style="left:1290px;top:455px"><use href="#lk"/></svg><svg class="i" style="left:1297px;top:450px"><use href="#cs"/></svg>
<span class="t" style="left:1317px;top:450px">bootstrap.min.css</span>
<svg class="l" style="left:1290px;top:473px"><use href="#lk"/></svg><svg class="i" style="left:1297px;top:468px"><use href="#dc"/></svg>
<span class="t" style="left:1317px;top:468px">bootstrap.min.css.map</span>
<svg class="l" style="left:1290px;top:491px"><use href="#lk"/></svg><svg class="i" style="left:1297px;top:486px"><use href="#cs"/></svg>
<span class="t" style="left:1317px;top:486px">Site.css</span>

<svg class="i" style="left:1254px;top:504px"><use href="#ee"/></svg>
<svg class="i" style="left:1279px;top:504px"><use href="#fp"/></svg>
<span class="t" style="left:1299px;top:504px">Controllers</span>
<svg class="i" style="left:1271px;top:522px"><use href="#ec"/></svg>
<svg class="l" style="left:1290px;top:527px"><use href="#lk"/></svg>
<span class="vb" style="left:1298px;top:524px">VB</span>
<span class="t" style="left:1317px;top:522px">HomeController.vb</span>
<svg class="i" style="left:1254px;top:540px"><use href="#ec"/></svg>
<svg class="i" style="left:1279px;top:540px"><use href="#fo"/></svg>
<span class="t" style="left:1299px;top:540px">fonts</span>
<svg class="i" style="left:1254px;top:558px"><use href="#ee"/></svg>
<svg class="i" style="left:1279px;top:558px"><use href="#fp"/></svg>
<span class="t" style="left:1299px;top:558px">Models</span>
<svg class="i" style="left:1271px;top:576px"><use href="#ec"/></svg>
<svg class="r" style="left:1290px;top:581px;width:7px;height:7px" viewBox="0 0 7 7"><path d="M3.500 0v7M0 3.500h7" stroke="#1e7a33" stroke-width="1.500"/></svg>
<span class="vb" style="left:1298px;top:578px">VB</span>
<span class="t" style="left:1317px;top:576px">MyArticlesRecord.vb</span>
<svg class="i" style="left:1254px;top:594px"><use href="#ec"/></svg>
<svg class="i" style="left:1279px;top:594px"><use href="#fo"/></svg>
<span class="t" style="left:1299px;top:594px">Scripts</span>
<svg class="i" style="left:1254px;top:612px"><use href="#ee"/></svg>
<svg class="i" style="left:1279px;top:612px"><use href="#fp"/></svg>
<span class="t" style="left:1299px;top:612px">Views</span>
<svg class="i" style="left:1271px;top:630px"><use href="#ec"/></svg>
<svg class="i" style="left:1297px;top:630px"><use href="#fo"/></svg>
<span class="t" style="left:1317px;top:630px">Home</span>
<svg class="i" style="left:1271px;top:648px"><use href="#ec"/></svg>
<svg class="i" style="left:1297px;top:648px"><use href="#fo"/></svg>
<span class="t" style="left:1317px;top:648px">Shared</span>
<svg class="l" style="left:1290px;top:671px"><use href="#lk"/></svg>
<svg class="i" style="left:1297px;top:666px" viewBox="0 0 16 16"><path d="M3.500 3H1.500v10H3.500M12.500 3h2v10h-2" fill="none" stroke="#424242"/><circle cx="8" cy="8" r="3.500" fill="none" stroke="#424242"/><circle cx="8" cy="8" r="1.300" fill="#424242"/></svg>
<span class="t" style="left:1317px;top:666px">_ViewStart.vbhtml</span>
<svg class="l" style="left:1290px;top:689px"><use href="#lk"/></svg><svg class="i" style="left:1297px;top:684px"><use href="#pl"/></svg>
<span class="t" style="left:1317px;top:684px">Web.config</span>
<svg class="l" style="left:1272px;top:707px"><use href="#lk"/></svg>
<svg class="i" style="left:1279px;top:702px" viewBox="0 0 16 16"><path d="M2.500 1h7l4 4v10h-11z" fill="#fff" stroke="#424242"/><path d="M6 7l1 2.500L9 9 7.500 11l1 2-2-1-2 1 1-2L4 9z" fill="#424242"/></svg>
<span class="t" style="left:1299px;top:702px">favicon.ico</span>
<svg class="l" style="left:1272px;top:725px"><use href="#lk"/></svg>
<svg class="i" style="left:1279px;top:720px" viewBox="0 0 16 16"><path d="M4.500 1h7l3 3v10H9" fill="#fff" stroke="#424242"/><circle cx="5" cy="11" r="3.500" fill="#fff" stroke="#6a6a6a" stroke-width="2" stroke-dasharray="1.500 1"/></svg>
<span class="t" style="left:1299px;top:720px">Global.asax</span>
<svg class="l" style="left:1272px;top:743px"><use href="#lk"/></svg><svg class="i" style="left:1279px;top:738px"><use href="#pl"/></svg>
<span class="t" style="left:1299px;top:738px">packages.config</span>
<svg class="l" style="left:1272px;top:761px"><use href="#lk"/></svg><svg class="i" style="left:1279px;top:756px"><use href="#pl"/></svg>
<span class="t" style="left:1299px;top:756px">Web.config</span>

<!-- diagnostic tab -->
<span class="t w" style="left:1577px;top:86px;writing-mode:vertical-rl;line-height:14px">Diagnostic Tools</span>

<!-- SE tabs -->
<div class="r" style="left:1247px;top:947px;width:100px;height:20px;background:#fff"></div>
<span class="t" style="left:1253px;top:949px;letter-spacing:-.1px">Solution Explorer</span>
<div class="r" style="left:1348px;top:948px;width:66px;height:19px;background:#4d6082"></div>
<span class="t w" style="left:1354px;top:950px;letter-spacing:-.3px">Class View</span>
<div class="r" style="left:1416px;top:948px;width:85px;height:19px;background:#4d6082"></div>
<span class="t w" style="left:1421px;top:950px;letter-spacing:-.2px">Team Explorer</span>

<!-- Properties -->
<div class="r" style="left:1247px;top:975px;width:320px;height:155px;background:#fff;border:1px solid #8e9bbc"></div>
<div class="r" style="left:1247px;top:975px;width:322px;height:21px;background:#4d6082"></div>
<span class="t w" style="left:1252px;top:978px">Properties</span>
<svg class="a" style="left:1520px;top:984px"><use href="#dw"/></svg>
<svg class="i" style="left:1533px;top:978px"><use href="#pin"/></svg>
<svg class="i" style="left:1549px;top:978px"><use href="#xx"/></svg>
<svg class="r" style="left:1558px;top:1006px;width:6px;height:3px" viewBox="0 0 7 4"><path d="M0 0h7L3.500 4z" fill="#1e1e1e"/></svg>
<div class="r" style="left:1249px;top:1021px;width:318px;height:25px;background:#cfd6e5"></div>
<svg class="i" style="left:1254px;top:1025px" viewBox="0 0 16 16"><path d="M1 1h5v5H1zM1 9h5v5H1z" fill="#424242"/><path d="M2.500 3.500h2M2.500 11.500h2M3.500 2.500v2M3.500 10.500v2" stroke="#fff"/><path d="M8 2h7M8 4h7M8 6h7M8 10h7M8 12h5M8 14h3" stroke="#424242"/></svg>
<div class="r" style="left:1274px;top:1022px;width:21px;height:21px;background:#fff;border:1px solid #4d6082"></div>
<span class="r" style="left:1277px;top:1023px;font:bold 9px/10px 'Liberation Sans',sans-serif;background:#424242;color:#fff;width:10px;text-align:center">A</span>
<span class="r" style="left:1277px;top:1033px;font:bold 9px/10px 'Liberation Sans',sans-serif;color:#424242;width:10px;text-align:center">Z</span>
<svg class="r" style="left:1288px;top:1026px;width:7px;height:14px" viewBox="0 0 7 14"><path d="M3.500 0v12M.5 9l3 4 3-4" fill="none" stroke="#00539c" stroke-width="1.600"/></svg>
<div class="sep" style="left:1300px;top:1024px;height:20px"></div>
<svg class="i" style="left:1306px;top:1025px" viewBox="0 0 16 16"><path d="M14.500 3.500l-3 3-2-2 3-3C9.500.6 6.500 2.500 7 6L1.500 11.500c-1 2 1 4 3 3L10 9c3.300.5 5.500-2 4.500-5.500z" fill="#a3a8b2"/></svg>
<div class="r" style="left:1249px;top:1067px;width:318px;height:1px;background:#e9e9ec"></div>

<!-- status bar -->
<div class="r" style="left:0;top:1137px;width:1600px;height:23px;background:#007acc"></div>
<svg class="r" style="left:4px;top:1142px;width:16px;height:13px" viewBox="0 0 16 13"><path d="M4 .5h11.500L12 12.500H.5z" fill="none" stroke="#fff"/></svg>
<span class="t w" style="left:28px;top:1141px">Item(s) Saved</span>
<span class="t w" style="left:840px;top:1141px">Ln 38</span>
<span class="t w" style="left:933px;top:1141px">Col 1</span>
<span class="t w" style="left:1024px;top:1141px">Ch 1</span>
<span class="t w" style="left:1160px;top:1141px">INS</span>
<svg class="i" style="left:1310px;top:1141px" viewBox="0 0 16 16"><path d="M8 2l5 6H9.500v7h-3V8H3z" fill="#d8ebf8"/></svg>
<span class="t w" style="left:1332px;top:1141px">4</span>
<svg class="i" style="left:1360px;top:1141px" viewBox="0 0 16 16"><path d="M11 1.500l3 2.500-7.500 9L3 15l.5-4z" fill="#d8ebf8"/></svg>
<span class="t w" style="left:1382px;top:1141px">2</span>
<svg class="i" style="left:1410px;top:1141px" viewBox="0 0 16 16"><path d="M8 0l8 8-8 8-8-8z" fill="#e8f2fa"/><path d="M6 5l3.500 3.500V12M8 5v7" stroke="#007acc" fill="none"/></svg>
<span class="t w" style="left:1433px;top:1141px">WebApi-1</span>
<svg class="i" style="left:1507px;top:1141px" viewBox="0 0 16 16"><circle cx="3" cy="3" r="2.200" fill="#d8ebf8"/><circle cx="13" cy="3" r="2.200" fill="#d8ebf8"/><circle cx="8" cy="14" r="2" fill="#d8ebf8"/><path d="M3 3l5 6 5-6M8 9v5" stroke="#d8ebf8" fill="none" stroke-width="1.500"/></svg>
<span class="t w" style="left:1530px;top:1141px">master</span>
<svg class="r" style="left:1570px;top:1147px;width:8px;height:4px" viewBox="0 0 8 4"><path d="M0 4h8L4 0z" fill="#fff"/></svg>

<!-- taskbar -->
<div class="r" style="left:0;top:1160px;width:1600px;height:40px;background:#1d1c1b"></div>
<div class="r" style="left:627px;top:1160px;width:40px;height:40px;background:#3b3b3b"></div>
<div class="r" style="left:667px;top:1160px;width:3px;height:40px;background:#303030"></div>
<div class="ub" style="left:103px;width:26px"></div><div class="ub" style="left:130px;width:8px"></div>
<div class="ub" style="left:147px;width:35px"></div><div class="ub" style="left:191px;width:35px"></div>
<div class="ub" style="left:235px;width:27px"></div><div class="ub" style="left:263px;width:8px"></div>
<div class="ub" style="left:455px;width:35px"></div><div class="ub" style="left:499px;width:35px"></div>
<div class="ub" style="left:627px;width:40px"></div><div class="ub" style="left:676px;width:34px"></div>
<div class="ub" style="left:894px;width:34px"></div><div class="ub" style="left:1109px;width:34px"></div>
<div class="ub" style="left:1152px;width:34px"></div><div class="ub" style="left:1195px;width:35px"></div>
<div class="ub" style="left:1238px;width:34px"></div>

<svg class="r" style="left:16px;top:1172px;width:16px;height:16px" viewBox="0 0 16 16"><path d="M0 2.300l7-1v6.200H0zM8 1.100L16 0v7.500H8zM0 8.500h7v6.200l-7-1zM8 8.500h8V16l-8-1.100z" fill="#fff"/></svg>
<svg class="r" style="left:63px;top:1171px;width:17px;height:17px" viewBox="0 0 17 17"><path d="M.5 .5h11M.5 16.500h11M2 5.500h8v6H2z M13 1h3M13 16h3" fill="none" stroke="#fff"/><path d="M14 5h2v2h-2z" fill="#fff"/><path d="M14.500 9v5M14.500 2v2" stroke="#fff"/></svg>
<!-- firefox -->
<svg class="k" style="left:108px" viewBox="0 0 24 24"><circle cx="12" cy="13" r="11" fill="#f0652e"/><path d="M13 1c5 1 10 6 10 12 0 3-1 5-2 6 1-5-1-9-4-10 0-3-2-6-4-8z" fill="#f8b43a"/><circle cx="12" cy="12" r="5.500" fill="#4f3fb0"/><path d="M4 10c2 2 6 1 8-1-1 3-3 6 1 7" fill="none" stroke="#f59a23" stroke-width="2.500"/></svg>
<!-- cmd -->
<svg class="k" style="left:151px" viewBox="0 0 24 24"><path d="M.5 3.500h23v18H.5z" fill="#111" stroke="#888"/><path d="M.5 3.500h23v2H.5z" fill="#888"/><path d="M15 15h6" stroke="#ddd"/><path d="M3 9h1M5 9h2M8 9h2M3 11h5" stroke="#bbb"/></svg>
<!-- colored magnifier -->
<svg class="k" style="left:196px" viewBox="0 0 24 24"><path d="M5 3l6-1-1 8-8 3z" fill="#e0762a"/><path d="M13 3l9-1-3 10-7-2z" fill="#75a63a"/><path d="M2 14l7-1-1 8-9 2z" fill="#3a6bb0"/><path d="M14 14l6-1-3 9-6 1z" fill="#caa93a"/><circle cx="11" cy="11" r="6" fill="#d8ecf5" stroke="#e8e8e8" stroke-width="1.500"/></svg>
<!-- explorer -->
<svg class="k" style="left:240px" viewBox="0 0 24 24"><path d="M2 3h9l2 2h9v17H2z" fill="#f4d77b"/><path d="M2 8h20v14H2z" fill="#fbe59e"/><path d="M7 15h10v7h-3v-3h-4v3H7z" fill="#2d9fd8"/><path d="M6 16l6-4 6 4z" fill="#2d9fd8"/></svg>
<!-- floppy -->
<svg class="k" style="left:283px" viewBox="0 0 24 24"><path d="M1 1h19l3 3v19H1z" fill="#0a0ad8"/><path d="M6 1h10v7H6z" fill="#d0d0d8"/><path d="M11 2h3v5h-3z" fill="#1a1a6a"/><path d="M3 10h18v12H3z" fill="#fff"/><path d="M3 11.500h18M3 14h18M3 16.500h18" stroke="#d8272e" stroke-width="1.500"/><path d="M3 19h18v3H3z" fill="#d8272e"/></svg>
<!-- Photoshop -->
<div class="r" style="left:329px;top:1168px;width:20px;height:20px;background:#0d2a4a;border:1px solid #79b7e8"></div>
<span class="t" style="left:332px;top:1172px;color:#8ec9f7;font-weight:bold;font-size:13px">Ps</span>
<!-- blender -->
<svg class="k" style="left:373px" viewBox="0 0 24 24"><path d="M1 11l9-1-6 4h5l-4 3 6 4c6 1 13-4 12-9C22 6 15 3 10 4l3 3-6 0 5 3z" fill="#ea7600"/><circle cx="15" cy="12" r="5" fill="#fff"/><circle cx="15" cy="12" r="3" fill="#265787"/></svg>
<!-- audacity -->
<svg class="k" style="left:416px" viewBox="0 0 24 24"><path d="M2 16C1 -2 23 -2 22 16" fill="none" stroke="#0a14e0" stroke-width="2.200"/><path d="M0 14h4v7H0zM20 14h4v7h-4z" fill="#0a14e0"/><ellipse cx="12" cy="15" rx="7" ry="8" fill="#d8a32a"/><path d="M5 15h14" stroke="#d01818" stroke-width="3"/></svg>
<!-- chart note -->
<svg class="k" style="left:460px" viewBox="0 0 24 24"><path d="M2 1h16l3 3v19H2z" fill="#eee" stroke="#999"/><path d="M2 16h19v7H2z" fill="#7ab648"/><path d="M6 5v10M9 8v7M12 10v5" stroke="#444"/><path d="M21 1l-7 14" stroke="#d8a32a" stroke-width="2"/></svg>
<!-- gimp -->
<svg class="k" style="left:503px" viewBox="0 0 24 24"><ellipse cx="13" cy="14" rx="10" ry="7" fill="#d18c1a"/><ellipse cx="14" cy="15" rx="5" ry="4" fill="#a81818"/><circle cx="7" cy="4" r="2" fill="#f0a32a"/><circle cx="14" cy="3" r="2" fill="#f0a32a"/><circle cx="20" cy="5" r="2" fill="#f0a32a"/><circle cx="2" cy="9" r="2" fill="#f0a32a"/></svg>
<!-- tools -->
<svg class="k" style="left:548px" viewBox="0 0 24 24"><path d="M2 1h6v10H2z" fill="#e8b83a"/><path d="M12 3h8v9" fill="none" stroke="#5d9b3a" stroke-dasharray="2 2"/><path d="M4 23L20 8M22 23L8 10" stroke="#ddd" stroke-width="2.500"/></svg>
<!-- infinity -->
<svg class="k" style="left:591px" viewBox="0 0 24 24"><path d="M12 12c-3-4-5-5-7-5s-4 2-4 5 2 5 4 5 4-1 7-5c3 4 5 5 7 5s4-2 4-5-2-5-4-5-4 1-7 5z" fill="none" stroke="#3d6fd8" stroke-width="2.500"/></svg>
<!-- VS -->
<svg class="k" style="left:635px" viewBox="0 0 24 24"><path d="M17 0l6 2.500v19L17 24l-9-9-5 3.500L0 17V7l3-1.500L8 9z" fill="#7f5bb5"/><path d="M17 6.500v11L11 12zM3 9v6l3-3z" fill="#3b3b3b"/></svg>
<!-- notepad -->
<svg class="k" style="left:678px" viewBox="0 0 24 24"><path d="M6 1h16l-3 20H1z" fill="#cfe3f2"/><path d="M1 21h18l1 2H2z" fill="#6a9bc0"/><path d="M6 1h16v2H6z" fill="#3d89c4"/></svg>
<!-- vmware -->
<svg class="k" style="left:723px" viewBox="0 0 24 24"><path d="M9 9V3.500C9 2.500 9.500 2 10.500 2h10c1 0 1.500.5 1.500 1.500v10c0 1-.5 1.500-1.500 1.500H15" fill="none" stroke="#a0d02a" stroke-width="3"/><path d="M15 15v5.500c0 1-.5 1.500-1.500 1.500h-10C2.500 22 2 21.500 2 20.500v-10C2 9.500 2.500 9 3.500 9H9" fill="none" stroke="#e8b12a" stroke-width="3"/><path d="M9 9h6v6H9z" fill="none" stroke="#a0d02a" stroke-width="2"/></svg>
<!-- clapper -->
<svg class="k" style="left:768px" viewBox="0 0 24 24"><path d="M2 9h20v14H2z" fill="#eee"/><path d="M1 3l20-3 1 5-20 3z" fill="#222"/><path d="M4 3l2 4M9 2l2 4M14 1l2 4" stroke="#eee" stroke-width="1.500"/></svg>
<span class="t" style="left:771px;top:1179px;font-size:9px;line-height:9px;font-weight:bold;color:#c33">321</span>
<!-- Thunderbird -->
<svg class="k" style="left:811px" viewBox="0 0 24 24"><circle cx="12" cy="12" r="11.500" fill="#1b85cc"/><path d="M3 13c4-3 8-1 9 1 2-3 6-4 9-2-3 0-6 3-8 6-1-3-5-5-10-5z" fill="#fff"/></svg>
<!-- server globe -->
<svg class="k" style="left:856px" viewBox="0 0 24 24"><path d="M12 3l10 2v19l-10-3z" fill="#c8c8c8"/><path d="M14 7l6 1M14 10l6 1M14 13l6 1" stroke="#666"/><circle cx="8" cy="8" r="7.500" fill="#3f8ed6"/><path d="M3 5l5-3 3 4-4 5z" fill="#7ac144"/><path d="M9 9l4-2 1 5-5 1z" fill="#e8c13a"/></svg>
<!-- mR -->
<div class="r" style="left:899px;top:1168px;width:24px;height:23px;background:#222;border-radius:3px"></div>
<span class="t" style="left:901px;top:1172px;font-weight:bold;font-size:12px;color:#3c9ae8">m<span style="color:#d8d8d8">R</span></span>
<!-- lambda -->
<svg class="k" style="left:943px" viewBox="0 0 24 24"><path d="M4 5l8-3 8 3v14l-8 3-8-3z" fill="#bcc7d6"/><path d="M4 5l8 3v14l-8-3z" fill="#8fa6c0"/></svg>
<span class="t" style="left:949px;top:1172px;color:#3d5fa8;font-weight:bold">λ</span>
<!-- network star -->
<svg class="k" style="left:984px" viewBox="0 0 24 24"><path d="M5 4l14 5-7 13z" fill="none" stroke="#1ba1e2" stroke-width="2.500"/><circle cx="5" cy="4" r="3" fill="#1ba1e2"/><circle cx="19" cy="9" r="3" fill="#1ba1e2"/><circle cx="12" cy="22" r="2" fill="#1ba1e2"/></svg>
<!-- knot -->
<svg class="k" style="left:1028px" viewBox="0 0 24 24"><path d="M3 7l18 10M3 17l18-10M8 2l8 20M16 2l-8 20" stroke="#f2f2f2" stroke-width="3.200"/></svg>
<!-- VS purple -->
<svg class="k" style="left:1071px" viewBox="0 0 24 24"><path d="M17 0l6 2.500v19L17 24l-9-9-5 3.500L0 17V7l3-1.500L8 9z" fill="#7b3fc4"/><path d="M17 6.500v11L11 12zM3 9v6l3-3z" fill="#1d1c1b"/></svg>
<!-- 7z -->
<div class="r" style="left:1114px;top:1168px;width:22px;height:22px;background:#fff"></div>
<div class="r" style="left:1116px;top:1170px;width:18px;height:18px;background:#111"></div>
<span class="t w" style="left:1117px;top:1172px;font-weight:bold;font-size:12px">7z</span>
<!-- list -->
<svg class="k" style="left:1157px" viewBox="0 0 24 24"><path d="M1 2h22v20H1z" fill="#e8e8e8"/><path d="M1 2h22v2H1z" fill="#6f8fb8"/><path d="M7 8h13M7 12h13M7 16h13M7 20h9" stroke="#9fb5cf"/><path d="M3 8h2M3 12h2M3 16h2" stroke="#5d9b3a" stroke-width="1.500"/></svg>
<!-- teamviewer -->
<svg class="k" style="left:1200px" viewBox="0 0 24 24"><path d="M0 0h24v24H0z" fill="#0e8ee9"/><circle cx="12" cy="12" r="10" fill="#fff"/><circle cx="12" cy="12" r="8.500" fill="#0e6bc9"/><path d="M4 12l4-3.500v2h8v-2l4 3.500-4 3.500v-2H8v2z" fill="#fff"/></svg>
<!-- Filezilla -->
<div class="r" style="left:1243px;top:1167px;width:24px;height:24px;background:#b81a14"></div>
<span class="t w" style="left:1245px;top:1171px;font-weight:bold;font-style:italic;font-size:17px">Fz</span>

<!-- tray -->
<svg class="r" style="left:1285px;top:1175px;width:12px;height:7px" viewBox="0 0 12 7"><path d="M.5 6.500L6 1l5.500 5.500" fill="none" stroke="#e8e8e8" stroke-width="1.200"/></svg>
<svg class="i" style="left:1307px;top:1171px" viewBox="0 0 16 16"><path d="M.5 .5h10v10h-10zM10.500 4h5M5 10.500v4M1 15h8" fill="none" stroke="#e8e8e8"/></svg>
<svg class="i" style="left:1331px;top:1171px" viewBox="0 0 16 16"><circle cx="8" cy="8" r="8" fill="#a9c93a"/><path d="M6 12l4-9M9 12l2-4" stroke="#fff" stroke-width="2"/></svg>
<svg class="i" style="left:1354px;top:1171px" viewBox="0 0 16 16"><path d="M3 1h10v14H3z" fill="#e8e8e8"/><path d="M6 6h4v5H6z" fill="#8a8a8a"/></svg>
<svg class="i" style="left:1379px;top:1171px" viewBox="0 0 16 16"><path d="M1 6h3l4-4v12l-4-4H1z" fill="none" stroke="#e8e8e8"/><path d="M10 5c1 2 1 4 0 6M12.500 3c2 3 2 7 0 10" fill="none" stroke="#e8e8e8"/></svg>
<svg class="i" style="left:1403px;top:1171px" viewBox="0 0 16 16"><path d="M8 1l7 7-7 7-7-7z" fill="#e0242e"/><path d="M4 1L0 8l4 7" fill="none" stroke="#e8e8e8"/></svg>
<svg class="i" style="left:1427px;top:1171px" viewBox="0 0 16 16"><path d="M0 0h16v16H0z" fill="#e8e8e8"/><path d="M1 6h14v9H1z" fill="#45b05a"/></svg>
<span class="t" style="left:1453px;top:1172px;color:#f0f0f0">ENG</span>
<span class="t" style="left:1490px;top:1163px;color:#f0f0f0;width:48px;text-align:center">12:41 AM</span>
<span class="t" style="left:1489px;top:1181px;color:#f0f0f0;width:50px;text-align:center">5/10/2018</span>
<svg class="i" style="left:1558px;top:1171px;width:18px;height:18px" viewBox="0 0 18 18"><path d="M1 1h16v12H7l-4 4v-4H1z" fill="#f0f0f0"/><path d="M4 5h10M4 8h10" stroke="#1d1c1b"/></svg>
<div class="r" style="left:1566px;top:1178px;width:15px;height:15px;border-radius:50%;background:#3a3a3a;border:1px solid #888;box-sizing:border-box"></div>
<span class="t w" style="left:1570px;top:1178px;font-size:11px;font-weight:bold">4</span>
</body>
</html>
